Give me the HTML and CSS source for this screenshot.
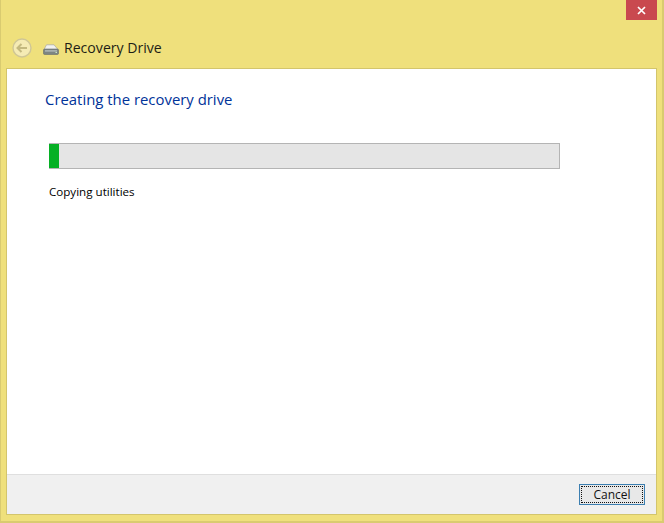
FILE: index.html
```html
<!DOCTYPE html>
<html lang="en">
<head>
<meta charset="utf-8">
<title>Recovery Drive</title>
<link rel="stylesheet" href="styles.css">
</head>
<body>
<div class="window">
  <div class="titlebar">
    <div class="close" aria-label="Close">
      <svg width="9" height="9" viewBox="0 0 9 9"><path d="M1 1l7 7M8 1l-7 7" stroke="#fff" stroke-width="1.7" fill="none"/></svg>
    </div>
  </div>
  <div class="nav">
    <svg class="back" width="20" height="20" viewBox="0 0 20 20">
      <circle cx="10" cy="10" r="9" fill="#f5ebb4" stroke="#cfc695" stroke-width="1.4"/>
      <path d="M15 10H6M9.5 6L5.5 10l4 4" stroke="#c4b97f" stroke-width="2" fill="none"/>
    </svg>
    <svg class="drive" width="16" height="11" viewBox="0 0 16 11">
      <path d="M3.5 .8h7.5l4 4.7H1z" fill="#f2f2ee" stroke="#a5a5a0" stroke-width=".7"/>
      <rect x=".5" y="5" width="15" height="5.5" rx="1.2" fill="#7d8583" stroke="#666d6c" stroke-width=".6"/>
      <rect x="2" y="6.2" width="12" height="1.4" fill="#b4bbb8"/>
      <rect x="12.5" y="8" width="1.5" height="1" fill="#c7e6c2"/>
    </svg>
    <span class="nav-title">Recovery Drive</span>
  </div>
  <div class="panel">
    <div class="content">
      <h1 class="heading">Creating the recovery drive</h1>
      <div class="progress"><div class="progress-fill" style="width:10px"></div></div>
      <p class="status">Copying utilities</p>
    </div>
    <div class="footer">
      <button class="btn" type="button"><span class="btn-label">Cancel</span></button>
    </div>
  </div>
</div>
</body>
</html>
```
FILE: styles.css
```css
* { box-sizing: border-box; }
html, body { margin: 0; padding: 0; }
body { width: 664px; height: 523px; overflow: hidden; font-family: "Open Sans", "Noto Sans", sans-serif; }
.window {
  width: 664px; height: 523px;
  background: #efe07c;
  border-right: 2px solid #d9cb70;
  border-bottom: 2px solid #d9cb70;
  box-shadow: inset 1px 0 #d9cb70;
  display: flex; flex-direction: column;
}
.titlebar { height: 20px; display: flex; justify-content: flex-end; padding-right: 5px; flex: none; }
.close { width: 31px; height: 20px; background: #c9494f; display: flex; align-items: center; justify-content: center; }
.nav { height: 48px; flex: none; display: flex; align-items: center; padding: 7px 0 0 12px; }
.back { flex: none; }
.drive { flex: none; margin: 4px 0 0 11px; }
.nav-title { margin-left: 5px; font-size: 14.1px; line-height: 18px; color: #1e1e16; }
.panel {
  width: 651px; height: 447px; margin-left: 6px;
  background: #fff;
  border: 1px solid #d3c56c;
  display: flex; flex-direction: column;
}
.content { flex: 1; padding: 20px 0 0 38px; }
.heading { margin: 0; font-size: 14.9px; line-height: 20px; font-weight: 400; color: #003399; }
.progress {
  width: 511px; height: 26px; margin: 34px 0 0 4px;
  background: #e5e5e5; border: 1px solid #b4b4b4;
  border-left-width: 0;
}
.progress-fill { height: 100%; background: #06b025; }
.status { margin: 14px 0 0 4px; font-size: 11.6px; line-height: 18px; color: #000; }
.footer {
  height: 40px; flex: none;
  background: #f0f0f0; border-top: 1px solid #dfdfdf;
  display: flex; justify-content: flex-end; align-items: flex-start;
  padding: 9px 11px 0 0;
}
.btn {
  width: 66px; height: 21px; padding: 1px;
  background: #e8e8e8; border: 1px solid #3c7fb1; border-radius: 0;
  font: inherit; display: flex;
}
.btn-label {
  flex: 1; border: 1px dotted #111;
  font-size: 12px; line-height: 15px; color: #111; text-align: center;
}
```
